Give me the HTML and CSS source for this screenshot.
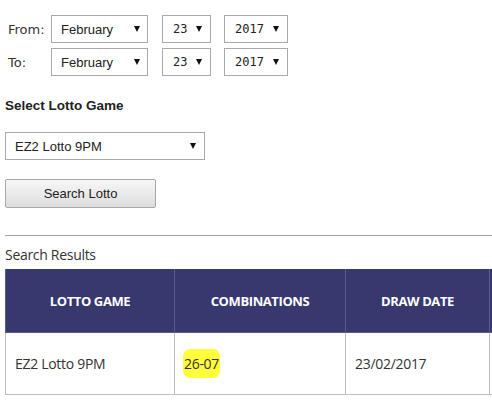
FILE: index.html
```html
<!DOCTYPE html>
<html lang="en">
<head>
  <meta charset="UTF-8" />
  <meta name="viewport" content="width=device-width, initial-scale=1.0" />
  <title>Lotto Results</title>

<link rel="stylesheet" href="styles.css">

</head>
<body>

<main>
  <form class="search-form">
    <div class="date-rows">
      <div class="date-row">
        <label for="fromMonth">From:</label>
        <span class="select-wrap month">
          <select id="fromMonth"><option>February</option></select>
        </span>
        <span class="select-wrap day">
          <select id="fromDay" class="mono"><option>23</option></select>
        </span>
        <span class="select-wrap year">
          <select id="fromYear" class="mono"><option>2017</option></select>
        </span>
      </div>
      <div class="date-row">
        <label for="toMonth">To:</label>
        <span class="select-wrap month">
          <select id="toMonth"><option>February</option></select>
        </span>
        <span class="select-wrap day">
          <select id="toDay" class="mono"><option>23</option></select>
        </span>
        <span class="select-wrap year">
          <select id="toYear" class="mono"><option>2017</option></select>
        </span>
      </div>
    </div>

    <h3 class="game-title">Select Lotto Game</h3>
    <span class="select-wrap game">
      <select id="game"><option>EZ2 Lotto 9PM</option></select>
    </span>

    <div>
      <button type="button" class="search-btn">Search Lotto</button>
    </div>
  </form>

  <hr class="divider">

  <p class="results-title">Search Results</p>

  <div class="results">
    <table class="results-table">
      <colgroup>
        <col class="col-game">
        <col class="col-combo">
        <col class="col-date">
        <col class="col-extra">
      </colgroup>
      <thead>
        <tr>
          <th>LOTTO GAME</th>
          <th>COMBINATIONS</th>
          <th>DRAW DATE</th>
          <th></th>
        </tr>
      </thead>
      <tbody>
        <tr>
          <td>EZ2 Lotto 9PM</td>
          <td><span class="mark">26-07</span></td>
          <td>23/02/2017</td>
          <td></td>
        </tr>
      </tbody>
    </table>
  </div>
</main>

</body>
</html>
```

FILE: styles.css
```css
html, body {
  margin: 0;
  padding: 0;
}

body {
  font-family: 'DejaVu Sans', Verdana, sans-serif;
  font-size: 13px;
  color: #333;
  background: #fff;
}

main {
  padding: 15px 0 0 5px;
}

.date-rows {
  display: grid;
  gap: 5px;
}

.date-row {
  display: flex;
  align-items: center;
  height: 28px;
}

.date-row label {
  width: 43px;
  padding-left: 3px;
  color: #333;
}

.select-wrap {
  position: relative;
  display: inline-block;
  height: 28px;
}

.select-wrap::after {
  content: "";
  position: absolute;
  right: 9px;
  top: 11px;
  border-left: 3.5px solid transparent;
  border-right: 3.5px solid transparent;
  border-top: 6px solid #111;
  pointer-events: none;
}

.select-wrap select {
  appearance: none;
  -webkit-appearance: none;
  width: 100%;
  height: 28px;
  margin: 0;
  border: 1px solid #a9a9a9;
  border-radius: 0;
  background: #fff;
  color: #222;
  font-family: 'Liberation Sans', Arial, sans-serif;
  font-size: 13px;
  padding: 0 20px 0 9px;
}

.select-wrap select.mono {
  font-family: 'DejaVu Sans Mono', 'Liberation Mono', monospace;
  font-size: 12px;
  padding-left: 10px;
}

.month { width: 97px; }
.day { width: 49px; margin-left: 14px; }
.year { width: 64px; margin-left: 13px; }
.month::after { right: 8px; }

.game-title {
  font-family: 'Liberation Sans', Arial, sans-serif;
  font-size: 13.5px;
  font-weight: bold;
  line-height: 16px;
  color: #222;
  margin: 22px 0 18px;
}

.game {
  width: 200px;
}

.search-btn {
  width: 151px;
  height: 29px;
  margin-top: 19px;
  font-family: 'Liberation Sans', Arial, sans-serif;
  font-size: 13px;
  color: #222;
  background: linear-gradient(#f7f7f7, #dddddd);
  border: 1px solid #a8a8a8;
  border-radius: 2px;
}

.divider {
  border: none;
  border-top: 1px solid #a3a3a3;
  margin: 27px 0 0;
}

.results-title {
  font-family: 'Open Sans', sans-serif;
  font-size: 14px;
  letter-spacing: -0.3px;
  line-height: 20px;
  margin: 9px 0 4px;
  color: #333;
}

.results {
  overflow: hidden;
}

.results-table {
  border-collapse: collapse;
  table-layout: fixed;
  width: 635px;
  font-family: 'Open Sans', sans-serif;
}

.col-game { width: 169px; }
.col-combo { width: 171px; }
.col-date { width: 144px; }
.col-extra { width: 150px; }

.results-table th {
  background: #37386e;
  color: #fff;
  font-size: 13px;
  font-weight: bold;
  letter-spacing: -0.4px;
  height: 63px;
  padding: 0;
  text-align: center;
  border: 1px solid #5b5c8a;
  border-top: none;
}

.results-table td {
  height: 61px;
  padding: 0 9px;
  font-size: 14px;
  letter-spacing: -0.3px;
  color: #333;
  border: 1px solid #bdbdbd;
}

.mark {
  background: #ffff3c;
  border-radius: 7px;
  padding: 5px 1px;
  margin-left: -1px;
}
```
